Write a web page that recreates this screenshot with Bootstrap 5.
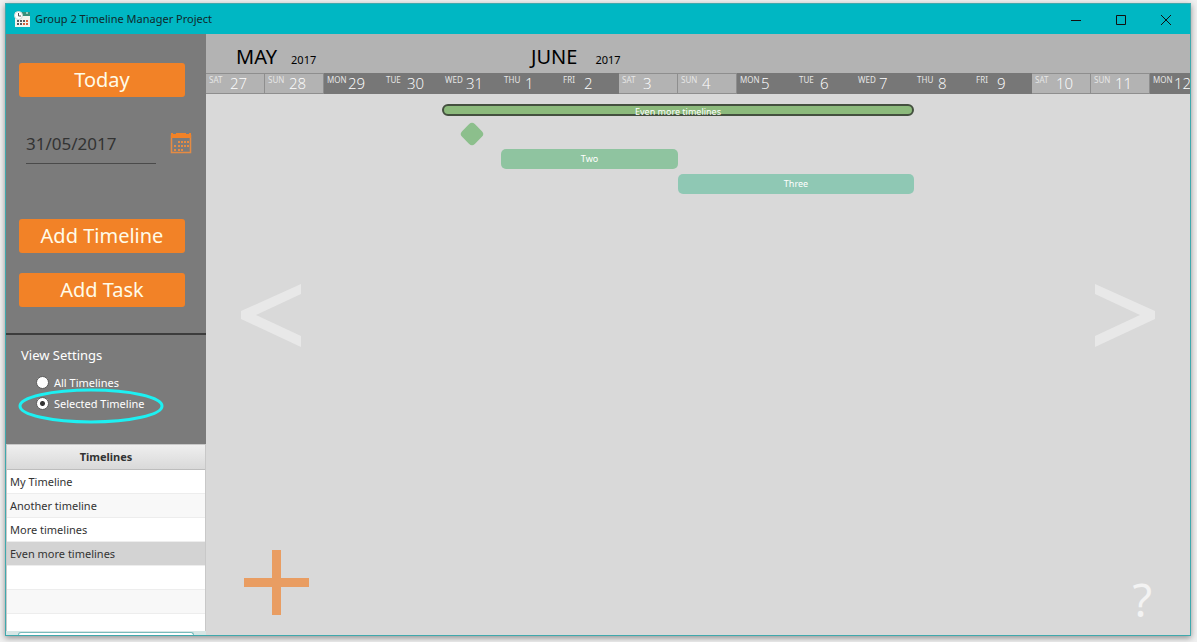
<!DOCTYPE html>
<html lang="en">
<head>
<meta charset="utf-8">
<meta name="viewport" content="width=device-width, initial-scale=1">
<title>Group 2 Timeline Manager Project</title>
<link href="https://cdn.jsdelivr.net/npm/bootstrap@5.3.0/dist/css/bootstrap.min.css" rel="stylesheet">
<style>
  :root { --day: 59px; --accent: #f28227; --side: #7b7b7b; --weekend: #b3b3b3; }
  body { font-family: "Noto Sans", "Open Sans", sans-serif; font-size: 11px; line-height: 16px; background: #f0f0f0; color: #333; padding: 3px 6px 6px 5px; height: 100vh; }
  .app-window { border: 1px solid #3fa9ad; box-shadow: 0 2px 6px #0006; background: #d9d9d9; }
  .title-bar { background: #00b7c3; color: #10292b; height: 30px; padding: 0 2px 0 8px; }
  .title-text { padding-left: 5px; }
  .win-btn { width: 45px; height: 30px; }
  .side-panel { width: 200px; background: var(--side); }
  .side-top { padding: 29px 13px 26px; border-bottom: 2px solid #3c3c3c; }
  .btn-flat { --bs-btn-bg: var(--accent); --bs-btn-color: #fffbe8; --bs-btn-hover-bg: #e0751f; --bs-btn-hover-color: #fff; --bs-btn-border-width: 0; --bs-btn-border-radius: 3px; width: 166px; height: 34px; padding: 0; font-size: 20px; line-height: 34px; }
  .btn-flat + .btn-flat { margin-top: 20px; }
  .date-row { margin: 27px 0 55px; padding-left: 7px; gap: 14px; }
  .date-box { width: 130px; height: 40px; border: 0; border-bottom: 1px solid #4a4a4a; background: none; color: #333; font-size: 17px; padding: 0; }
  .view-panel { height: 109px; padding: 11px 15px; color: #fff; }
  .view-title { font-size: 13px; line-height: 18px; margin: 0 0 8px; }
  .opt-line { height: 21px; padding-left: 15px; gap: 5px; }
  .opt-line .form-check-input { width: 13px; height: 13px; margin: 0; background-color: #fff; border: 1px solid #5a5a5a; }
  .opt-line .form-check-input:checked { background-image: radial-gradient(circle, #333 0 2px, #fff 3px); }
  .highlight-ring { left: 12px; top: 53px; width: 146px; height: 36px; pointer-events: none; }
  .list-area { background: #fff; border: 1px solid #c8c8c8; border-bottom: 0; }
  .time-table { color: #333; }
  .time-table th { height: 24px; padding: 4px; background: linear-gradient(#efefef, #d9d9d9); border-bottom: 1px solid #bdbdbd; text-align: center; }
  .time-table td { height: 24px; padding: 3px; border-bottom: 1px solid #ededed; }
  .time-table tbody tr:nth-child(even) { background: #f8f8f8; }
  .time-table tbody tr.is-picked { background: #d3d3d3; }
  .scroll-strip { height: 4px; background: #d6e6e5; padding: 1px 12px 0; }
  .scroll-thumb { height: 3px; background: #fff; border: 1px solid #77bcbc; border-bottom: 0; border-radius: 3px 3px 0 0; }
  .day-grid { display: grid; grid-template-columns: repeat(17, var(--day)); }
  .month-row { background: var(--weekend); height: 39px; color: #000; }
  .month-cell { padding: 11px 0 0 30px; gap: 14px; line-height: 24px; }
  .month-name { font-size: 20px; }
  .days-row { height: 21px; background: #777; color: #fff; }
  .day-cell { padding-left: 3px; }
  .day-cell.is-weekend { background: var(--weekend); border: solid #8e8e8e; border-width: 1px 1px 1px 0; }
  .day-name { width: 21px; font-size: 8px; line-height: 14px; color: #e6e6e6; flex: none; }
  .day-num { font-family: "Open Sans", sans-serif; font-weight: 300; font-size: 15px; line-height: 21px; }
  .is-weekend .day-num { line-height: 19px; }
  .is-weekend .day-name { line-height: 12px; }
  .bars { grid-template-rows: 12px 23px 20px 20px; row-gap: 5px; padding-top: 10px; font-size: 9px; color: #fff; text-align: center; }
  .bar-main { grid-area: 1 / 5 / 2 / 13; background: #8cba7c; border: 2px solid #44503f; border-radius: 6px; line-height: 11px; }
  .gem { grid-area: 2 / 5 / 3 / 6; }
  .bar-two { grid-area: 3 / 6 / 4 / 9; background: #8fc4a0; border-radius: 5px; line-height: 20px; }
  .bar-three { grid-area: 4 / 9 / 5 / 13; background: #8fc8b4; border-radius: 5px; line-height: 20px; }
  .plain { background: none; border: 0; padding: 0; display: block; }
  .arrows { padding: 84px 34px 0; }
  .foot-row { padding: 0 38px 17px; }
  .help-mark { font-size: 45px; line-height: 36px; color: #f3f3f3; }
</style>
</head>
<body>
<div class="app-window d-flex flex-column h-100 overflow-hidden">
  <header class="title-bar d-flex align-items-center flex-shrink-0">
    <svg width="16" height="16" viewBox="0 0 16 16" aria-hidden="true">
      <path fill="#f4f4ee" d="M1 1h15v15H1z"/><path fill="#39907a" d="M7 1h9v4H7z"/>
      <path fill="#5b5b5b" d="M3 9h2v2H3zM6 9h2v2H6zM3 12h2v2H3zM6 12h2v2H6zM9 9h2v2H9z"/><path fill="#d9603b" d="M12 9h2v2h-2zM9 12h2v2H9zM12 12h2v2h-2z"/>
      <circle cx="4.500" cy="4.500" r="4" fill="#fff" stroke="#cfd8d4"/><path d="M4.500 2v3H7" fill="none" stroke="#555"/><path d="M13 1v2" stroke="#fff"/>
    </svg>
    <span class="title-text me-auto">Group 2 Timeline Manager Project</span>
    <button class="plain win-btn" type="button" aria-label="Minimize"><svg width="12" height="12" viewBox="0 0 12 12"><path d="M1 6.500h10" stroke="#111"/></svg></button>
    <button class="plain win-btn" type="button" aria-label="Maximize"><svg width="12" height="12" viewBox="0 0 12 12"><path d="M1.500 1.500h9v9h-9z" fill="none" stroke="#111"/></svg></button>
    <button class="plain win-btn" type="button" aria-label="Close"><svg width="12" height="12" viewBox="0 0 12 12"><path d="M1 1l10 10M11 1L1 11" stroke="#111"/></svg></button>
  </header>

  <div class="d-flex flex-fill overflow-hidden">
    <aside class="side-panel d-flex flex-column flex-shrink-0">
      <div class="side-top">
        <button class="btn btn-flat d-block" type="button">Today</button>
        <div class="date-row d-flex align-items-center">
          <input class="date-box" type="text" value="31/05/2017" aria-label="Date">
          <button class="plain" type="button" aria-label="Open calendar">
            <svg class="d-block" width="22" height="22" viewBox="0 0 22 22">
              <path d="M1.500 2.500h19v17h-19z" fill="none" stroke="#e58b43" stroke-width="1.500"/>
              <path fill="#f28227" d="M1 0h2v1h3V0h10v1h3V0h2v5H1z"/>
              <path fill="#e58b43" d="M8 8h2v2H8zM11 8h2v2h-2zM14 8h2v2h-2zM17 8h2v2h-2zM4 12h2v2H4zM8 12h2v2H8zM11 12h2v2h-2zM14 12h2v2h-2zM17 12h2v2h-2zM4 16h2v2H4zM8 16h2v2H8zM11 16h2v2h-2z"/>
            </svg>
          </button>
        </div>
        <button class="btn btn-flat d-block" type="button">Add Timeline</button>
        <button class="btn btn-flat d-block" type="button">Add Task</button>
      </div>

      <div class="view-panel position-relative flex-shrink-0">
        <h2 class="view-title fw-normal">View Settings</h2>
        <div class="opt-line d-flex align-items-center">
          <input class="form-check-input" type="radio" name="view" id="viewAll"><label for="viewAll">All Timelines</label>
        </div>
        <div class="opt-line d-flex align-items-center">
          <input class="form-check-input" type="radio" name="view" id="viewSel" checked><label for="viewSel">Selected Timeline</label>
        </div>
        <svg class="highlight-ring position-absolute" viewBox="0 0 146 36" aria-hidden="true"><ellipse cx="73" cy="18" rx="71" ry="16" fill="none" stroke="#1df0f2" stroke-width="3"/></svg>
      </div>

      <div class="list-area flex-fill overflow-hidden">
        <table class="time-table w-100">
          <thead><tr><th scope="col">Timelines</th></tr></thead>
          <tbody>
            <tr><td>My Timeline</td></tr>
            <tr><td>Another timeline</td></tr>
            <tr><td>More timelines</td></tr>
            <tr class="is-picked"><td>Even more timelines</td></tr>
            <tr><td></td></tr>
            <tr><td></td></tr>
            <tr><td></td></tr>
          </tbody>
        </table>
      </div>
      <div class="scroll-strip flex-shrink-0"><div class="scroll-thumb"></div></div>
    </aside>

    <main class="flex-fill d-flex flex-column overflow-hidden">
      <div class="month-row day-grid flex-shrink-0">
        <div class="month-cell d-flex align-items-baseline" style="grid-column: span 5"><span class="month-name">MAY</span><span>2017</span></div>
        <div class="month-cell d-flex align-items-baseline" style="grid-column: span 12"><span class="month-name">JUNE</span><span class="ps-1">2017</span></div>
      </div>
      <div class="days-row day-grid flex-shrink-0">
        <div class="day-cell d-flex is-weekend"><span class="day-name">SAT</span><span class="day-num">27</span></div>
        <div class="day-cell d-flex is-weekend"><span class="day-name">SUN</span><span class="day-num">28</span></div>
        <div class="day-cell d-flex"><span class="day-name">MON</span><span class="day-num">29</span></div>
        <div class="day-cell d-flex"><span class="day-name">TUE</span><span class="day-num">30</span></div>
        <div class="day-cell d-flex"><span class="day-name">WED</span><span class="day-num">31</span></div>
        <div class="day-cell d-flex"><span class="day-name">THU</span><span class="day-num">1</span></div>
        <div class="day-cell d-flex"><span class="day-name">FRI</span><span class="day-num">2</span></div>
        <div class="day-cell d-flex is-weekend"><span class="day-name">SAT</span><span class="day-num">3</span></div>
        <div class="day-cell d-flex is-weekend"><span class="day-name">SUN</span><span class="day-num">4</span></div>
        <div class="day-cell d-flex"><span class="day-name">MON</span><span class="day-num">5</span></div>
        <div class="day-cell d-flex"><span class="day-name">TUE</span><span class="day-num">6</span></div>
        <div class="day-cell d-flex"><span class="day-name">WED</span><span class="day-num">7</span></div>
        <div class="day-cell d-flex"><span class="day-name">THU</span><span class="day-num">8</span></div>
        <div class="day-cell d-flex"><span class="day-name">FRI</span><span class="day-num">9</span></div>
        <div class="day-cell d-flex is-weekend"><span class="day-name">SAT</span><span class="day-num">10</span></div>
        <div class="day-cell d-flex is-weekend"><span class="day-name">SUN</span><span class="day-num">11</span></div>
        <div class="day-cell d-flex"><span class="day-name">MON</span><span class="day-num">12</span></div>
      </div>
      <div class="bars day-grid">
        <div class="bar-main">Even more timelines</div>
        <svg class="gem mx-auto" width="26" height="26" viewBox="0 0 26 26" aria-hidden="true"><rect x="4" y="4" width="18" height="18" rx="4" fill="#8cbf8c" transform="rotate(45 13 13)"/></svg>
        <div class="bar-two">Two</div>
        <div class="bar-three">Three</div>
      </div>
      <div class="arrows d-flex justify-content-between">
        <button class="plain" type="button" aria-label="Earlier"><svg class="d-block" width="62" height="74" viewBox="0 0 62 74"><path fill="#e8e8e8" d="M61 6v10L16 37l45 21v11L1 41v-8z"/></svg></button>
        <button class="plain" type="button" aria-label="Later"><svg class="d-block" width="62" height="74" viewBox="0 0 62 74"><path fill="#e8e8e8" d="M1 6v10l45 21L1 58v11l60-28v-8z"/></svg></button>
      </div>
      <div class="foot-row d-flex justify-content-between align-items-end mt-auto">
        <button class="plain" type="button" aria-label="Add"><svg class="d-block" width="66" height="70" viewBox="0 0 66 70"><path fill="#e99d62" d="M28 2h9v28h28v9H37v28h-9V39H0v-9h28z"/></svg></button>
        <button class="plain help-mark" type="button" aria-label="Help">?</button>
      </div>
    </main>
  </div>
</div>
<script src="https://cdn.jsdelivr.net/npm/bootstrap@5.3.0/dist/js/bootstrap.bundle.min.js"></script>
</body>
</html>
